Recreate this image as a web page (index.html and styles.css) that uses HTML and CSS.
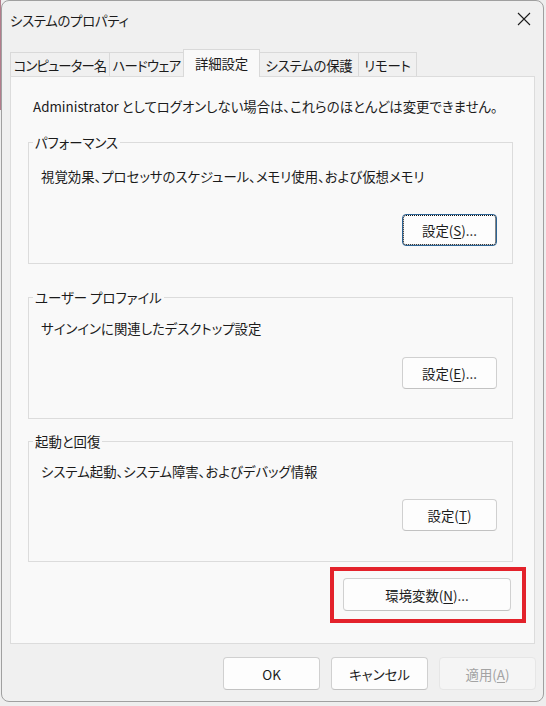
FILE: index.html
```html
<!DOCTYPE html>
<html lang="ja">
<head>
<meta charset="utf-8">
<title>システムのプロパティ</title>
<link rel="stylesheet" href="styles.css">
</head>
<body>
<div class="window">
  <div class="titlebar">
    <span class="title">システムのプロパティ</span>
    <span class="close" aria-label="閉じる">
      <svg width="14" height="14" viewBox="0 0 14 14"><path d="M1 1 L13 13 M13 1 L1 13" stroke="#1b1b1b" stroke-width="1.1" fill="none"/></svg>
    </span>
  </div>
  <div class="tabs">
    <div class="tab tab-1">コンピューター名</div>
    <div class="tab tab-2">ハードウェア</div>
    <div class="tab tab-3 active">詳細設定</div>
    <div class="tab tab-4">システムの保護</div>
    <div class="tab tab-5">リモート</div>
  </div>
  <div class="panel">
    <p class="note">Administrator としてログオンしない場合は、これらのほとんどは変更できません。</p>
    <fieldset class="group g1">
      <legend>パフォーマンス</legend>
      <p class="desc">視覚効果、プロセッサのスケジュール、メモリ使用、および仮想メモリ</p>
      <div class="btn-row"><button class="btn focus">設定(<u>S</u>)...</button></div>
    </fieldset>
    <fieldset class="group g2">
      <legend>ユーザー プロファイル</legend>
      <p class="desc">サインインに関連したデスクトップ設定</p>
      <div class="btn-row"><button class="btn">設定(<u>E</u>)...</button></div>
    </fieldset>
    <fieldset class="group g3">
      <legend>起動と回復</legend>
      <p class="desc">システム起動、システム障害、およびデバッグ情報</p>
      <div class="btn-row"><button class="btn">設定(<u>T</u>)</button></div>
    </fieldset>
    <div class="highlight">
      <button class="btn env">環境変数(<u>N</u>)...</button>
    </div>
  </div>
  <div class="footer">
    <button class="btn foot">OK</button>
    <button class="btn foot">キャンセル</button>
    <button class="btn foot disabled">適用(<u>A</u>)</button>
  </div>
</div>
</body>
</html>
```
FILE: styles.css
```css
* { box-sizing: border-box; }
html, body { margin: 0; padding: 0; }
body {
  width: 546px;
  height: 706px;
  overflow: hidden;
  background: linear-gradient(#b27c8b, #b27c8b) 0 0 / 1px 110px no-repeat, #eeeeee;
  font-family: "Noto Sans CJK JP", "Noto Sans", sans-serif;
  font-size: 13.4px;
  font-feature-settings: "palt";
  color: #1b1b1b;
}
.window {
  margin-left: 1px;
  width: 543px;
  height: 702px;
  border: 1px solid #a0a0a0;
  border-radius: 8px;
  background: #f0f0f0;
  display: flex;
  flex-direction: column;
}
.titlebar {
  height: 48px;
  display: flex;
  justify-content: space-between;
  align-items: flex-start;
  padding: 9px 0 0 8px;
  line-height: 20px;
}
.title { letter-spacing: -0.3px; }
.close {
  display: block;
  margin: 2px 12px 0 0;
  width: 14px;
  height: 14px;
}
.close svg { display: block; }
.tabs {
  height: 27px;
  display: flex;
  align-items: flex-end;
  padding-left: 8px;
}
.tab {
  height: 24px;
  border: 1px solid #d9d9d9;
  border-bottom: none;
  background: #f0f0f0;
  display: flex;
  align-items: center;
  justify-content: center;
  line-height: 20px;
  margin-left: -1px;
  white-space: nowrap;
  letter-spacing: -0.2px;
}
.tab-1 { width: 100px; margin-left: 0; letter-spacing: -0.9px; }
.tab-2 { width: 75px; letter-spacing: -0.7px; }
.tab-3 { width: 77px; }
.tab-4 { width: 100px; }
.tab-5 { width: 59px; }
.tab.active {
  height: 28px;
  margin-bottom: -1px;
  background: #f9f9f9;
  position: relative;
  z-index: 1;
  padding-bottom: 1px;
}
.panel {
  margin: 0 8px;
  height: 568px;
  border: 1px solid #dcdcdc;
  background: #f9f9f9;
  display: flex;
  flex-direction: column;
}
.note {
  margin: 19px 0 0 22px;
  line-height: 20px;
  white-space: nowrap;
}
.group {
  margin: 0 21px 0 17px;
  border: 1px solid #dcdcdc;
  padding: 0 15px 0 12px;
  min-width: 0;
}
.group legend {
  padding: 0 2px;
  margin-left: -8px;
  line-height: 20px;
}
.desc {
  margin: 0;
  line-height: 20px;
}
.btn-row {
  display: flex;
  justify-content: flex-end;
}
.g1 { margin-top: 16px; padding-top: 14px; padding-bottom: 17px; }
.g1 .btn-row { margin-top: 28px; }
.g2 { margin-top: 23px; padding-top: 11px; padding-bottom: 29px; }
.g2 .btn-row { margin-top: 19px; }
.g3 { margin-top: 12px; padding-top: 10px; padding-bottom: 30px; }
.g3 .btn-row { margin-top: 18px; }
.btn {
  font: inherit;
  font-feature-settings: "palt";
  color: #1b1b1b;
  background: #fdfdfd;
  border: 1px solid #d0d0d0;
  border-bottom-color: #c2c2c2;
  border-radius: 4px;
  width: 95px;
  height: 32px;
  padding: 0;
  line-height: 20px;
}
.btn u { text-underline-offset: 2px; text-decoration-thickness: 1px; }
.btn.focus {
  border: 1px solid #2c6394;
  outline: 1px dotted #111;
  outline-offset: -2px;
}
.highlight {
  align-self: flex-end;
  margin: 5px 8px 0 0;
  border: 4px solid #e3222b;
  padding: 7px 11px 8px 9px;
}
.btn.env {
  width: 168px;
  height: 33px;
}
.footer {
  display: flex;
  justify-content: flex-end;
  gap: 11px;
  padding: 13px 7px 0 0;
}
.btn.foot {
  width: 97px;
  height: 33px;
}
.btn.disabled {
  background: #f5f5f5;
  border-color: #e6e6e6;
  color: #a3a3a3;
}
```
